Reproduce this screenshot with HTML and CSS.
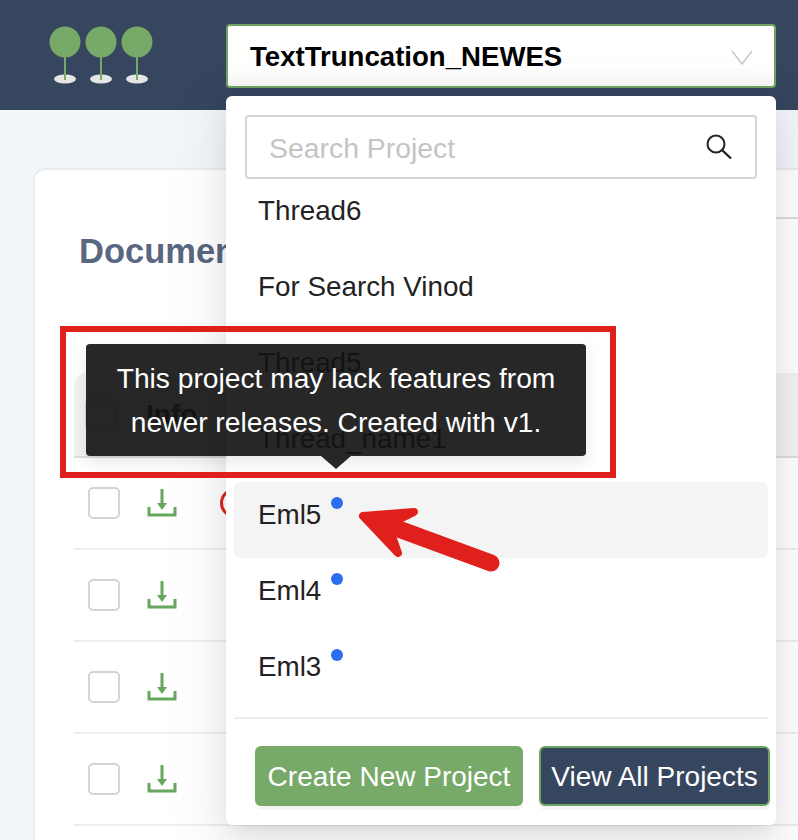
FILE: index.html
```html
<!DOCTYPE html>
<html lang="en">
<head>
<meta charset="UTF-8">
<meta name="viewport" content="width=device-width, initial-scale=1.0">
<title>Documents</title>
<link rel="stylesheet" href="styles.css">
</head>
<body>

<header class="topbar">
  <svg class="logo" width="110" height="64" viewBox="0 0 110 64">
    <g id="tree">
      <ellipse cx="16" cy="55" rx="11" ry="4.5" fill="#e6e6e6"/>
      <rect x="15" y="30" width="2" height="26" fill="#77a968"/>
      <circle cx="16" cy="18" r="15.5" fill="#77a968"/>
    </g>
    <use href="#tree" x="36"/>
    <use href="#tree" x="72"/>
  </svg>
  <div class="project-select">
    <span>TextTruncation_NEWES</span>
    <svg width="22" height="15" viewBox="0 0 22 15"><path d="M1 1l10 13L21 1" fill="none" stroke="#c9c9c9" stroke-width="1.5"/></svg>
  </div>
</header>

<main class="content">
  <section class="card">
    <div class="card-rule"></div>
    <h2 class="card-title">Documents</h2>
    <div class="table">
      <div class="table-head">
        <span class="checkbox checkbox-head"></span>
        <strong>Info</strong>
      </div>
      <div class="table-row">
        <span class="checkbox"></span>
        <svg class="download" width="30" height="30" viewBox="0 0 30 30"><path d="M15 1v16M2 19v8h26v-8" fill="none" stroke="#66a65e" stroke-width="3"/><path d="M10 15h10l-5 7z" fill="#66a65e"/></svg>
        <span class="status"></span>
      </div>
      <div class="table-row">
        <span class="checkbox"></span>
        <svg class="download" width="30" height="30" viewBox="0 0 30 30"><path d="M15 1v16M2 19v8h26v-8" fill="none" stroke="#66a65e" stroke-width="3"/><path d="M10 15h10l-5 7z" fill="#66a65e"/></svg>
      </div>
      <div class="table-row">
        <span class="checkbox"></span>
        <svg class="download" width="30" height="30" viewBox="0 0 30 30"><path d="M15 1v16M2 19v8h26v-8" fill="none" stroke="#66a65e" stroke-width="3"/><path d="M10 15h10l-5 7z" fill="#66a65e"/></svg>
      </div>
      <div class="table-row">
        <span class="checkbox"></span>
        <svg class="download" width="30" height="30" viewBox="0 0 30 30"><path d="M15 1v16M2 19v8h26v-8" fill="none" stroke="#66a65e" stroke-width="3"/><path d="M10 15h10l-5 7z" fill="#66a65e"/></svg>
      </div>
    </div>
  </section>
</main>

<div class="dropdown">
  <div class="search">
    <span>Search Project</span>
    <svg width="28" height="28" viewBox="0 0 28 28"><circle cx="11" cy="11" r="8.5" fill="none" stroke="#222" stroke-width="2"/><path d="M17 17l9 8.5" stroke="#222" stroke-width="2.4"/></svg>
  </div>
  <ul class="project-list">
    <li>Thread6</li>
    <li>For Search Vinod</li>
    <li>Thread5</li>
    <li>Thread_name1</li>
    <li class="hover">Eml5<i class="dot"></i></li>
    <li>Eml4<i class="dot"></i></li>
    <li>Eml3<i class="dot"></i></li>
  </ul>
  <div class="dropdown-footer">
    <button class="button button-create">Create New Project</button>
    <button class="button button-all">View All Projects</button>
  </div>
</div>

<div class="tooltip">This project may lack features from<br>newer releases. Created with v1.</div>

<!-- red annotation on top of the screenshot -->
<div class="mark-box"></div>
<svg class="mark-arrow" width="160" height="80" viewBox="0 0 160 80">
  <path d="M13 16L64 12L40 24L42 36L48 53Z" fill="#e0201c" stroke="#e0201c" stroke-width="8" stroke-linejoin="round"/>
  <path d="M35 24L141 63" fill="none" stroke="#e0201c" stroke-width="17" stroke-linecap="round"/>
</svg>

</body>
</html>
```

FILE: styles.css
```css
html, body {
  margin: 0;
  height: 840px;
  overflow: hidden;
}

body {
  font-family: "Liberation Sans", Arial, sans-serif;
  background-color: #f2f5fa;
  color: #222;
}

.topbar {
  display: flex;
  align-items: flex-start;
  height: 110px;
  padding: 24px 22px 0 49px;
  box-sizing: border-box;
  background-color: #36465f;
}

.logo {
  flex: none;
  margin-right: 67px;
}

.project-select {
  flex: 1;
  display: flex;
  align-items: center;
  justify-content: space-between;
  height: 64px;
  padding: 2px 21px 0 22px;
  box-sizing: border-box;
  border: 2px solid #6fa361;
  border-radius: 4px;
  background: linear-gradient(#fff 70%, #f6f6f6);
  font-size: 27.6px;
  font-weight: bold;
  color: #000;
}

.content {
  padding: 58px 0 0 33px;
}

.card {
  width: 800px;
  height: 700px;
  padding: 47px 0 0 39px;
  box-sizing: border-box;
  border: 2px solid #e8ebef;
  border-radius: 12px;
  background-color: #fff;
}

.card-rule {
  height: 2px;
  margin-left: 400px;
  background-color: #ddd;
}

.card-title {
  margin: 12px 0 0 5px;
  font-size: 34.5px;
  line-height: 40px;
  color: #5a6780;
}

.table {
  margin-top: 102px;
}

.table-head {
  display: flex;
  align-items: center;
  gap: 30px;
  height: 85px;
  padding-left: 11px;
  box-sizing: border-box;
  border-bottom: 2px solid #ddd;
  border-top-left-radius: 12px;
  background-color: #f2f2f2;
  font-size: 28px;
}

.table-row {
  display: flex;
  align-items: center;
  height: 92px;
  padding-left: 14px;
  box-sizing: border-box;
  border-bottom: 2px solid #eee;
}

.checkbox {
  flex: none;
  width: 32px;
  height: 32px;
  box-sizing: border-box;
  border: 2px solid #d4d4d4;
  border-radius: 5px;
  background-color: #fff;
}

.checkbox-head {
  width: 31px;
  height: 31px;
  background-color: transparent;
}

.download {
  flex: none;
  margin-left: 27px;
}

.status {
  flex: none;
  width: 30px;
  height: 30px;
  margin-left: 43px;
  box-sizing: border-box;
  border: 3px solid #e0201c;
  border-radius: 50%;
}

.dropdown {
  position: absolute;
  top: 96px;
  left: 226px;
  width: 550px;
  height: 729px;
  padding: 19px 19px 0;
  box-sizing: border-box;
  border-radius: 6px;
  background-color: #fff;
  box-shadow: 0 6px 12px -8px rgba(0, 0, 0, 0.12), 0 12px 32px rgba(0, 0, 0, 0.08), 0 18px 56px 16px rgba(0, 0, 0, 0.05);
}

.search {
  display: flex;
  align-items: center;
  justify-content: space-between;
  height: 64px;
  padding: 2px 22px 0;
  box-sizing: border-box;
  border: 2px solid #d4d4d4;
  border-radius: 4px;
  font-size: 28.4px;
  color: #c4c4c4;
}

.search svg {
  margin-top: -2px;
}

.project-list {
  margin: -1px -11px 0;
  padding: 0;
  list-style: none;
  font-size: 27.8px;
  color: #222;
}

.project-list li {
  display: flex;
  align-items: flex-start;
  height: 76px;
  padding: 15px 0 0 24px;
  box-sizing: border-box;
  line-height: 36px;
  border-radius: 6px;
}

.project-list .hover {
  background-color: #f4f4f4;
}

.dot {
  width: 12px;
  height: 12px;
  margin: 0 0 0 10px;
  border-radius: 50%;
  background-color: #2b6ff0;
}

.dropdown-footer {
  display: flex;
  gap: 16px;
  margin: 7px -11px 0;
  padding: 27px 0 0 21px;
  border-top: 2px solid #eee;
}

.button {
  flex: none;
  height: 60px;
  padding: 2px 0 0;
  box-sizing: border-box;
  border: none;
  border-radius: 6px;
  box-shadow: 0 4px 0 rgba(0, 0, 0, 0.04);
  font-family: inherit;
  font-size: 28px;
  color: #fff;
}

.button-create {
  width: 268px;
  background-color: #77a968;
}

.button-all {
  width: 231px;
  border: 2px solid #6fa361;
  background-color: #36465f;
}

.tooltip {
  position: absolute;
  top: 344px;
  left: 86px;
  width: 500px;
  height: 112px;
  padding-top: 12px;
  box-sizing: border-box;
  border-radius: 4px;
  background-color: rgba(18, 18, 18, 0.91);
  box-shadow: 0 6px 16px rgba(0, 0, 0, 0.1);
  font-size: 28.2px;
  line-height: 44px;
  text-align: center;
  color: #fff;
}

.tooltip::after {
  content: "";
  position: absolute;
  top: 112px;
  left: 235px;
  border: 15px solid transparent;
  border-top: 13px solid #272727;
  border-bottom: 0;
}

.mark-box {
  position: absolute;
  top: 326px;
  left: 60px;
  width: 556px;
  height: 152px;
  box-sizing: border-box;
  border: 6px solid #e0201c;
}

.mark-arrow {
  position: absolute;
  top: 500px;
  left: 350px;
}
```
